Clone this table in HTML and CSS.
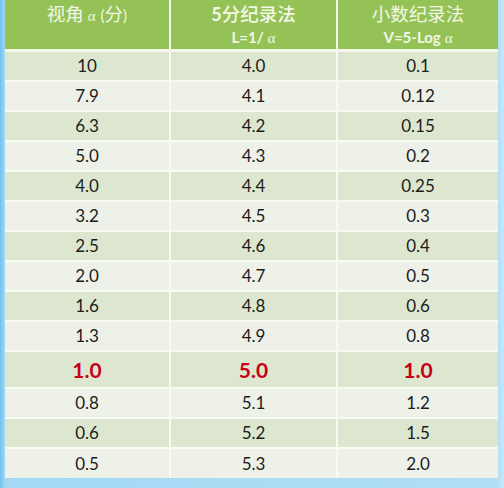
FILE: index.html
```html
<!DOCTYPE html>
<html lang="zh">
<head>
<meta charset="utf-8">
<link rel="stylesheet" href="styles.css">
</head>
<body>
<div class="frame">
  <table class="chart">
    <colgroup>
      <col class="c1"><col class="c2"><col class="c3">
    </colgroup>
    <thead>
      <tr>
        <th><span class="cjk">视角</span> <span class="alpha gap">α</span>(<span class="cjk">分</span>)<br>&nbsp;</th>
        <th><b>5<span class="cjk">分纪录法</span></b><br><b class="sub">L=1/</b> <span class="alpha">α</span></th>
        <th><span class="cjk">小数纪录法</span><br><b class="sub">V=5-Log</b> <span class="alpha">α</span></th>
      </tr>
    </thead>
    <tbody>
      <tr class="g"><td>10</td><td>4.0</td><td>0.1</td></tr>
      <tr class="w"><td>7.9</td><td>4.1</td><td>0.12</td></tr>
      <tr class="g"><td>6.3</td><td>4.2</td><td>0.15</td></tr>
      <tr class="w"><td>5.0</td><td>4.3</td><td>0.2</td></tr>
      <tr class="g"><td>4.0</td><td>4.4</td><td>0.25</td></tr>
      <tr class="w"><td>3.2</td><td>4.5</td><td>0.3</td></tr>
      <tr class="g"><td>2.5</td><td>4.6</td><td>0.4</td></tr>
      <tr class="w"><td>2.0</td><td>4.7</td><td>0.5</td></tr>
      <tr class="g"><td>1.6</td><td>4.8</td><td>0.6</td></tr>
      <tr class="w"><td>1.3</td><td>4.9</td><td>0.8</td></tr>
      <tr class="g hi"><td>1.0</td><td>5.0</td><td>1.0</td></tr>
      <tr class="w"><td>0.8</td><td>5.1</td><td>1.2</td></tr>
      <tr class="g"><td>0.6</td><td>5.2</td><td>1.5</td></tr>
      <tr class="w"><td>0.5</td><td>5.3</td><td>2.0</td></tr>
    </tbody>
  </table>
</div>
</body>
</html>
```
FILE: styles.css
```css
html, body {
  margin: 0;
  padding: 0;
}
body {
  width: 504px;
  height: 488px;
  overflow: hidden;
  background: #b6e1f6;
}
.frame {
  padding: 0 6px 5px 5px;
  background: linear-gradient(90deg, #6fc1ef 0px, #a3d9f4 5px, #b0def5 497px, #c4e8f8 504px);
  height: 488px;
  box-sizing: border-box;
}
.chart {
  width: 493px;
  border-collapse: collapse;
  table-layout: fixed;
  font-family: Lato, "Noto Sans", "Noto Sans CJK SC", sans-serif;
  color: #1c1c1c;
}
.c1 { width: 165px; }
.c2 { width: 167px; }
.c3 { width: 161px; }
.chart th {
  background: #95c256;
  color: #f2f8e6;
  font-weight: normal;
  font-size: 15px;
  line-height: 22px;
  height: 49px;
  padding: 2px 0 0;
  box-sizing: border-box;
  vertical-align: top;
  border-left: 2px solid #f4f8ec;
  border-bottom: 3px solid #f4f8ec;
  text-align: center;
}
.chart th:first-child, .chart td:first-child { border-left: none; }
.cjk {
  font-family: "Noto Sans CJK SC", sans-serif;
  font-size: 18.5px;
  font-weight: normal;
}
.chart th b { font-weight: bold; font-size: 18px; }
.chart th b .cjk { font-weight: 500; }
.chart th .sub { font-size: 15px; }
.alpha {
  font-family: "Liberation Serif", serif;
  font-size: 15px;
}
.gap { margin-right: 5px; }
.chart td {
  text-align: center;
  font-size: 17px;
  height: 30px;
  padding: 0;
  box-sizing: border-box;
  border-left: 2px solid #f8faf4;
  border-top: 2px solid #f8faf4;
}
.chart tbody tr:first-child td { border-top: none; }
.g td { background: #dde7cf; }
.w td { background: #eef1e8; }
.hi td {
  height: 37px;
  color: #c8001a;
  font-weight: bold;
  font-size: 21px;
}
```
